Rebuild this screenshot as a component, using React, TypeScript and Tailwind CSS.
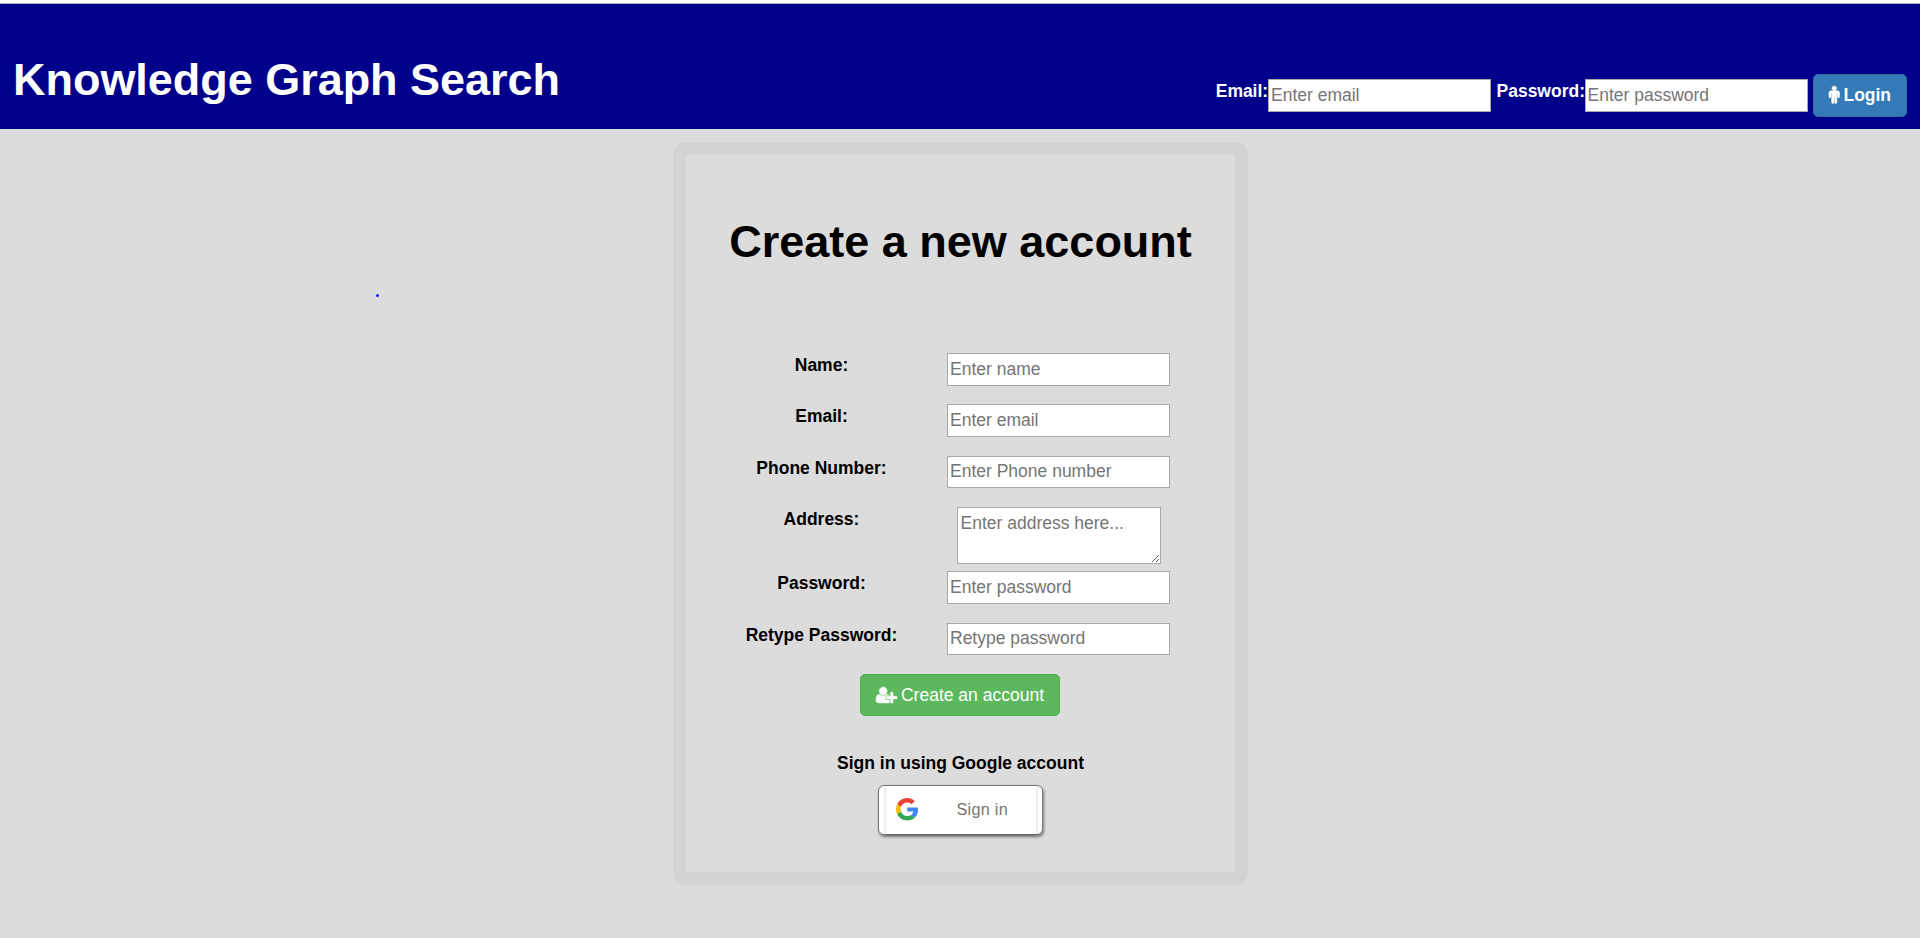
import type { ReactNode } from "react";

function MaleIcon() {
  return (
    <svg
      viewBox="0 160 1024 1760"
      preserveAspectRatio="none"
      className="-mt-[2px] h-[17.5px] w-[10.5px] overflow-visible"
      fill="currentColor"
      stroke="currentColor"
      strokeWidth="50"
    >
      <path d="M1024 832v416q0 40-28 68t-68 28-68-28-28-68v-352h-64v912q0 46-33 79t-79 33-79-33-33-79v-464h-64v464q0 46-33 79t-79 33-79-33-33-79v-912h-64v352q0 40-28 68t-68 28-68-28-28-68v-416q0-80 56-136t136-56h640q80 0 136 56t56 136z" />
      <path d="M736 384q0 93-65.5 158.5t-158.5 65.5-158.5-65.5-65.5-158.5 65.5-158.5 158.5-65.5 158.5 65.5 65.5 158.5z" />
    </svg>
  );
}

function UserPlusIcon() {
  return (
    <svg
      viewBox="0 128 2048 1536"
      preserveAspectRatio="none"
      className="-mt-px h-[16px] w-[21px] overflow-visible"
      fill="currentColor"
      stroke="currentColor"
      strokeWidth="40"
    >
      <path d="M704 896q-159 0-271.5-112.5t-112.5-271.5 112.5-271.5 271.5-112.5 271.5 112.5 112.5 271.5-112.5 271.5-271.5 112.5zm960 128h352q13 0 22.5 9.5t9.5 22.5v192q0 13-9.5 22.5t-22.5 9.5h-352v352q0 13-9.5 22.5t-22.5 9.5h-192q-13 0-22.5-9.5t-9.5-22.5v-352h-352q-13 0-22.5-9.5t-9.5-22.5v-192q0-13 9.5-22.5t22.5-9.5h352v-352q0-13 9.5-22.5t22.5-9.5h192q13 0 22.5 9.5t9.5 22.5v352zm-736 224q0 52 38 90t90 38h256v238q-68 50-171 50h-874q-121 0-194-69t-73-190q0-53 3.5-103.5t14-109 26.5-108.5 43-97.5 62-81 85.5-53.5 111.5-20q19 0 39 17 79 61 154.5 91.5t164.5 30.5 164.5-30.5 154.5-91.5q20-17 39-17 132 0 217 96h-223q-52 0-90 38t-38 90v192z" />
    </svg>
  );
}

function GoogleIcon() {
  return (
    <svg viewBox="0 0 48 48" className="-mt-px size-[22.5px] shrink-0">
      <path fill="#EA4335" d="M24 9.5c3.54 0 6.71 1.22 9.21 3.6l6.85-6.85C35.9 2.38 30.47 0 24 0 14.62 0 6.51 5.38 2.56 13.22l7.98 6.19C12.43 13.72 17.74 9.5 24 9.5z" />
      <path fill="#4285F4" d="M46.98 24.55c0-1.57-.15-3.09-.38-4.55H24v9.02h12.94c-.58 2.96-2.26 5.48-4.78 7.18l7.73 6c4.51-4.18 7.09-10.36 7.09-17.65z" />
      <path fill="#FBBC05" d="M10.53 28.59c-.48-1.45-.76-2.99-.76-4.59s.27-3.14.76-4.59l-7.98-6.19C.92 16.46 0 20.12 0 24c0 3.88.92 7.54 2.56 10.78l7.97-6.19z" />
      <path fill="#34A853" d="M24 48c6.48 0 11.93-2.13 15.89-5.81l-7.73-6c-2.15 1.45-4.92 2.3-8.16 2.3-6.26 0-11.57-4.22-13.47-9.91l-7.98 6.19C6.51 42.62 14.62 48 24 48z" />
    </svg>
  );
}

const fieldBox =
  "block shrink-0 border border-[#a9a9a9] bg-white text-[17.5px] leading-5 font-normal text-black placeholder:text-[#757575] focus:outline-none";

function Row({ label, height, children }: { label: string; height: string; children: ReactNode }) {
  return (
    <div className={`flex items-start ${height}`}>
      <label className="w-[269px] text-center text-[17.5px] leading-[25px] font-bold">{label}</label>
      <div className="flex w-[205px] justify-center">{children}</div>
    </div>
  );
}

function Header() {
  return (
    <header className="flex h-[129px] shrink-0 flex-col bg-[#00008b] text-white">
      <div className="h-[3px] shrink-0 bg-white" />
      <div className="h-px shrink-0 bg-[#a9a9b4]" />
      <div className="flex flex-1 items-start justify-between px-[13px]">
        <h1 className="mt-[51px] text-[45px] leading-[50px] font-bold tracking-[-0.03px] whitespace-nowrap">Knowledge Graph Search</h1>
        <form className="mt-[70px] flex items-start text-[17.5px] font-bold">
          <label className="mt-[5px] flex w-[52px] justify-end leading-[25px] tracking-[-0.05px]">Email:</label>
          <input type="text" placeholder="Enter email" className={`${fieldBox} mt-[5px] h-[33px] w-[223px] px-[2px]`} />
          <label className="mt-[5px] flex w-[94px] justify-end leading-[25px]">Password:</label>
          <input type="password" placeholder="Enter password" className={`${fieldBox} mt-[5px] h-[33px] w-[223px] px-[1.5px]`} />
          <button className="ml-[5px] flex h-[43px] w-[94px] items-center justify-center gap-1 rounded-[5px] border border-[#2e6da4] bg-[#337ab7] text-white">
            <MaleIcon />
            <span>Login</span>
          </button>
        </form>
      </div>
    </header>
  );
}

function SignUpForm() {
  return (
    <form className="mt-[86px] w-[547px]">
      <Row label="Name:" height="h-[51px]">
        <input placeholder="Enter name" className={`${fieldBox} h-[33px] w-[223px] px-[2px]`} />
      </Row>
      <Row label="Email:" height="h-[52px]">
        <input placeholder="Enter email" className={`${fieldBox} h-[33px] w-[223px] px-[2px]`} />
      </Row>
      <Row label="Phone Number:" height="h-[51px]">
        <input placeholder="Enter Phone number" className={`${fieldBox} h-[32px] w-[223px] px-[2px] pb-[2px]`} />
      </Row>
      <Row label="Address:" height="h-[64px]">
        <textarea placeholder="Enter address here..." className={`${fieldBox} ml-px h-[57px] w-[204px] px-[2.5px] py-[5px]`} />
      </Row>
      <Row label="Password:" height="h-[52px]">
        <input type="password" placeholder="Enter password" className={`${fieldBox} h-[33px] w-[223px] px-[2px]`} />
      </Row>
      <Row label="Retype Password:" height="h-[51px]">
        <input type="password" placeholder="Retype password" className={`${fieldBox} h-[32px] w-[223px] px-[2px] pb-[2px]`} />
      </Row>
    </form>
  );
}

export default function App() {
  return (
    <div className="flex h-[938px] w-full flex-col overflow-hidden bg-[#dcdcdc] font-['Liberation_Sans',Arial,sans-serif] text-black">
      <Header />
      <main className="relative flex flex-1 justify-center pt-[13px]">
        <span className="absolute top-[165px] left-[376px] size-[3px] rounded-full bg-[#1a1af0]" />
        <div className="ml-px h-[743px] w-[575px] rounded-[12.5px] bg-[#d3d3d3] p-[13px]">
          <section className="flex h-full flex-col items-center bg-[#dcdcdc]">
            <h1 className="mt-[62px] text-[45px] leading-[50px] font-bold whitespace-nowrap">Create a new account</h1>
            <SignUpForm />
            <button className="mr-px flex h-[42px] w-[200px] items-center justify-center gap-1 rounded-[5px] border border-[#4cae4c] bg-[#5cb85c] text-[17.5px] text-white">
              <UserPlusIcon />
              <span>Create an account</span>
            </button>
            <p className="mt-[35px] text-[17.5px] leading-[25px] font-bold">Sign in using Google account</p>
            <button className="mt-[9px] flex h-[50px] w-[165px] justify-center rounded-[6px] border border-[#777] bg-white shadow-[1px_2px_3px_rgba(0,0,0,0.45)]">
              <span className="flex h-full w-[150px] items-center bg-white pl-[10px] shadow-[0_1px_3px_rgba(0,0,0,0.25)]">
                <GoogleIcon />
                <span className="-mt-[2px] ml-[38.5px] text-[16.25px] tracking-[0.26px] whitespace-nowrap text-[#757575]">Sign in</span>
              </span>
            </button>
          </section>
        </div>
      </main>
    </div>
  );
}
